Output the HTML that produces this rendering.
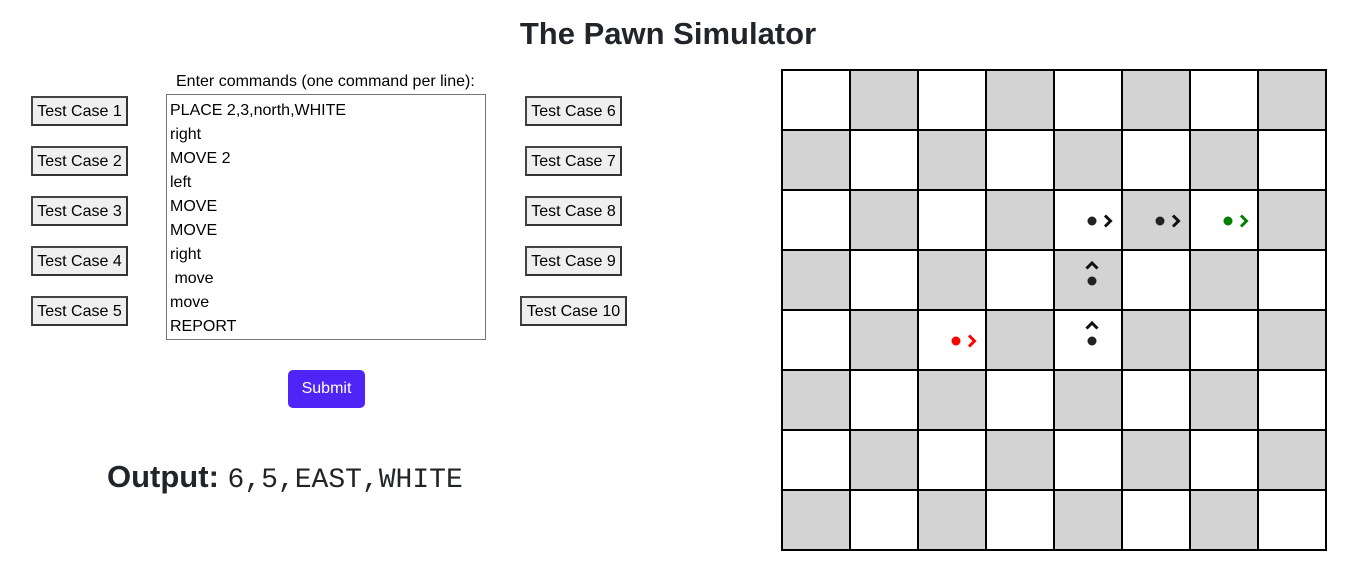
<!DOCTYPE html>
<html><head><meta charset="utf-8"><style>
body{margin:0;width:1363px;height:574px;background:#fff;font-family:"Liberation Sans","DejaVu Sans",sans-serif;color:#212529;position:relative;overflow:hidden}
.a{position:absolute}
h1{position:absolute;left:0;width:1336px;top:16px;margin:0;text-align:center;font-size:31px;font-weight:bold;color:#212529}
.btn{position:absolute;height:26px;border:2px solid #444;border-right-color:#333;border-bottom-color:#333;background:#efefef;font-size:16px;line-height:27px;text-align:center;color:#000;box-sizing:content-box}
.ta{position:absolute;left:166px;top:94px;width:320px;height:246px;border:1px solid #767676;box-sizing:border-box;padding:4px 3px;font-size:16px;line-height:24px;color:#000;white-space:pre}
.board{position:absolute;left:781px;top:69px;display:grid;grid-template-columns:repeat(8,66px);grid-auto-rows:58px;gap:2px;padding:2px;background:#000}
.board div{background:#fff}.board div.g{background:#d3d3d3}
</style></head><body>
<h1>The Pawn Simulator</h1>
<div class="a" style="left:176px;top:73px;font-size:16px;color:#000">Enter commands (one command per line):</div>
<div class="btn" style="left:31px;top:96px;width:93px">Test Case 1</div>
<div class="btn" style="left:31px;top:146px;width:93px">Test Case 2</div>
<div class="btn" style="left:31px;top:196px;width:93px">Test Case 3</div>
<div class="btn" style="left:31px;top:246px;width:93px">Test Case 4</div>
<div class="btn" style="left:31px;top:296px;width:93px">Test Case 5</div>
<div class="btn" style="left:525px;top:96px;width:93px">Test Case 6</div>
<div class="btn" style="left:525px;top:146px;width:93px">Test Case 7</div>
<div class="btn" style="left:525px;top:196px;width:93px">Test Case 8</div>
<div class="btn" style="left:525px;top:246px;width:93px">Test Case 9</div>
<div class="btn" style="left:520px;top:296px;width:103px">Test Case 10</div>
<div class="ta">PLACE 2,3,north,WHITE
right
MOVE 2
left
MOVE
MOVE
right
 move
move
REPORT</div>
<div class="a" style="left:288px;top:370px;width:77px;height:38px;background:#4f25f7;border-radius:5px;color:#fff;font-size:16px;line-height:38px;text-align:center">Submit</div>
<div class="a" style="left:107px;top:459px;font-size:31px;font-weight:bold;color:#212529;white-space:nowrap">Output: <span style="font-family:'Liberation Mono',monospace;font-weight:normal;font-size:28px">6,5,EAST,WHITE</span></div>
<div class="board">
<div></div><div class="g"></div><div></div><div class="g"></div><div></div><div class="g"></div><div></div><div class="g"></div>
<div class="g"></div><div></div><div class="g"></div><div></div><div class="g"></div><div></div><div class="g"></div><div></div>
<div></div><div class="g"></div><div></div><div class="g"></div><div></div><div class="g"></div><div></div><div class="g"></div>
<div class="g"></div><div></div><div class="g"></div><div></div><div class="g"></div><div></div><div class="g"></div><div></div>
<div></div><div class="g"></div><div></div><div class="g"></div><div></div><div class="g"></div><div></div><div class="g"></div>
<div class="g"></div><div></div><div class="g"></div><div></div><div class="g"></div><div></div><div class="g"></div><div></div>
<div></div><div class="g"></div><div></div><div class="g"></div><div></div><div class="g"></div><div></div><div class="g"></div>
<div class="g"></div><div></div><div class="g"></div><div></div><div class="g"></div><div></div><div class="g"></div><div></div>
</div>
<svg class="a" style="left:0;top:0" width="1363" height="574" fill="none" stroke-width="3">
<g fill="#222"><circle cx="1092" cy="221" r="4.5"/><circle cx="1160" cy="221" r="4.5"/><circle cx="1092" cy="281" r="4.5"/><circle cx="1092" cy="341" r="4.5"/></g>
<circle cx="1228" cy="221" r="4.5" fill="#008000"/>
<circle cx="956" cy="341" r="4.5" fill="#ff0000"/>
<g stroke="#111"><polyline points="1105,215.5 1110.5,221 1105,226.5"/><polyline points="1173,215.5 1178.5,221 1173,226.5"/><polyline points="1086.5,268.5 1092,263 1097.5,268.5"/><polyline points="1086.5,328.5 1092,323 1097.5,328.5"/></g>
<polyline stroke="#008000" points="1241,215.5 1246.5,221 1241,226.5"/>
<polyline stroke="#ff0000" points="969,335.5 974.5,341 969,346.5"/>
</svg>
</body></html>
